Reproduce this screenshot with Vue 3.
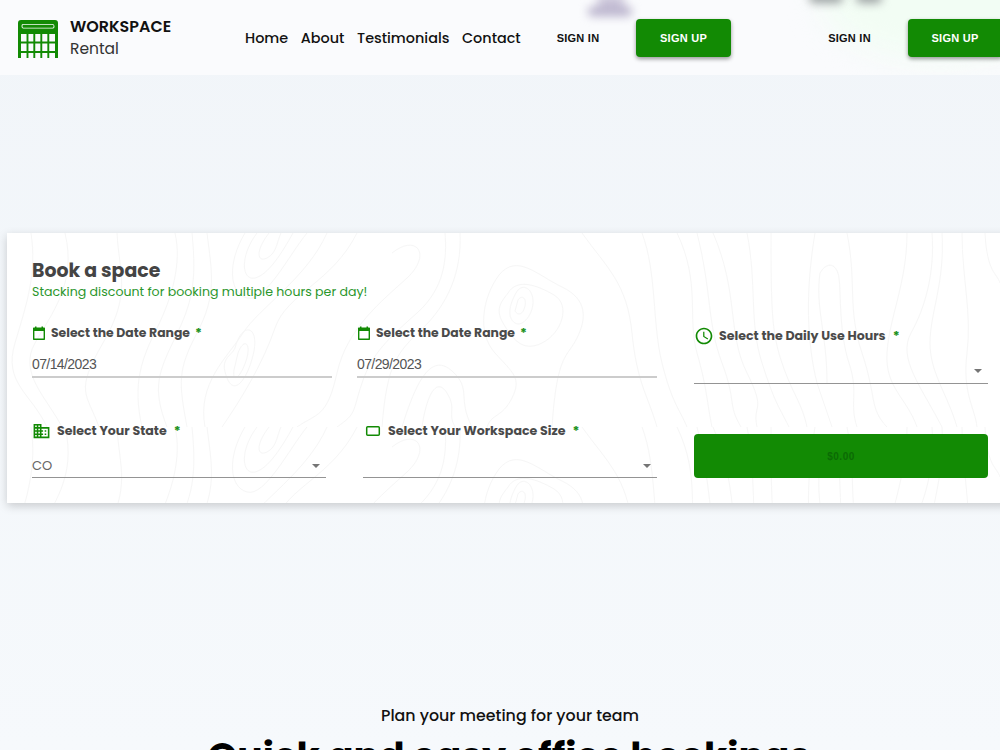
<template>
	<div class="page">
		<header class="top-bar">
			<span class="blur-shape violet"></span>
			<span class="blur-shape mint"></span>
			<span class="blur-shape dark"></span>
			<span class="blur-shape dark second"></span>

			<a class="brand">
				<svg class="logo" viewBox="0 0 40 39">
					<path fill-rule="evenodd" d="M3 0H37Q40 0 40 3V38H37V14H3V38H0V3Q0 0 3 0ZM5 4Q3.5 4 3.5 6T5 8.5H35Q36.500 8.500 36.500 6.500T35 4Z" fill="#128a04" />
					<rect x="4.500" y="4.700" width="31" height="3.100" rx="1" fill="#128a04" />
					<path d="M9.500 13V38M16.300 13V38M23.300 13V38M30.300 13V38M2 22.500H38M2 32H38" stroke="#128a04" stroke-width="1.900" />
				</svg>
				<div class="brand-text">
					<strong>WORKSPACE</strong>
					<span>Rental</span>
				</div>
			</a>

			<nav class="menu">
				<a v-for="item in menu" :key="item">{{ item }}</a>
			</nav>

			<div v-for="n in 2" :key="n" class="session">
				<button class="sign-in"><span>SIGN IN</span></button>
				<button class="sign-up"><span>SIGN UP</span></button>
			</div>
		</header>

		<section class="booking">
			<!-- topographic lines behind the form -->
			<svg class="contours" viewBox="0 0 993 270">
				<defs>
					<g id="contour-tile" fill="none" stroke="#f6f6f6" stroke-width="1">
						<path v-for="(line, i) in contours" :key="i" :d="line" />
					</g>
					<clipPath id="tile-clip"><rect width="993" height="194" /></clipPath>
				</defs>
				<g clip-path="url(#tile-clip)"><use href="#contour-tile" /></g>
				<g transform="translate(0 194)"><use href="#contour-tile" /></g>
			</svg>

			<div class="booking-body">
				<h2><span>Book a space</span></h2>
				<p class="discount"><span>Stacking discount for booking multiple hours per day!</span></p>

				<div class="fields">
					<div v-for="date in dates" :key="date" class="date-field">
						<label>
							<svg class="ico-calendar" viewBox="0 0 14 15">
								<path d="M1.700 2.200H12.300V13.200H1.700Z" fill="none" stroke="#128a04" stroke-width="1.400" stroke-linejoin="round" />
								<path d="M1 2H13V5H1ZM3 .5H4.500V3H3ZM9.500 .5H11V3H9.500Z" fill="#128a04" />
							</svg>
							<span class="txt">Select the Date Range</span><i>*</i>
						</label>
						<div class="date-value"><span>{{ date }}</span></div>
					</div>
					<div class="select-field hours">
						<label>
							<svg class="ico-clock" viewBox="0 0 24 24" fill="#128a04">
								<path d="M11.990 2C6.470 2 2 6.480 2 12s4.470 10 9.990 10C17.520 22 22 17.520 22 12S17.520 2 11.990 2zM12 20c-4.420 0-8-3.580-8-8s3.580-8 8-8 8 3.580 8 8-3.580 8-8 8zm.5-13H11v6l5.250 3.150.75-1.230-4.500-2.670z" />
							</svg>
							<span class="txt">Select the Daily Use Hours</span><i>*</i>
						</label>
						<div class="select-value"><span></span><b class="arrow"></b></div>
					</div>
				</div>

				<div class="fields second-row">
					<div class="select-field state">
						<label>
							<svg class="ico-state" viewBox="0 0 24 24" fill="#128a04">
								<path d="M12 7V3H2v18h20V7H12zM6 19H4v-2h2v2zm0-4H4v-2h2v2zm0-4H4V9h2v2zm0-4H4V5h2v2zm4 12H8v-2h2v2zm0-4H8v-2h2v2zm0-4H8V9h2v2zm0-4H8V5h2v2zm10 12h-8v-2h2v-2h-2v-2h2v-2h-2V9h8v10zm-2-8h-2v2h2v-2zm0 4h-2v2h2v-2z" />
							</svg>
							<span class="txt">Select Your State</span><i>*</i>
						</label>
						<div class="select-value"><span>CO</span><b class="arrow"></b></div>
					</div>
					<div class="select-field size">
						<label>
							<svg class="ico-size" viewBox="0 0 16 12">
								<rect x="1.700" y="1.700" width="12.600" height="8.600" rx="1" fill="none" stroke="#128a04" stroke-width="1.500" />
							</svg>
							<span class="txt">Select Your Workspace Size</span><i>*</i>
						</label>
						<div class="select-value"><span></span><b class="arrow"></b></div>
					</div>
					<button class="price" disabled>$0.00</button>
				</div>
			</div>
		</section>

		<section class="intro">
			<p><span>Plan your meeting for your team</span></p>
			<h1><span>Quick and easy office bookings</span></h1>
		</section>
	</div>
</template>

<script setup>
	import { ref } from 'vue';

	const menu = ref(['Home', 'About', 'Testimonials', 'Contact']);
	const dates = ref(['07/14/2023', '07/29/2023']);

	// curvas de nivel del fondo
	const contours = [
		'M24 0C30 40 20 70 8 110S24 160 40 194',
		'M58 0C70 50 45 80 28 110S40 165 55 194',
		'M110 0C112 40 125 60 96 110S80 160 92 194',
		'M168 0C175 30 165 65 150 95S125 150 135 194',
		'M185 0C190 50 185 70 168 105S145 155 160 194',
		'M200 0C205 40 210 62 190 100S172 150 180 194',
		'M238 0C220 30 222 60 240 65S282 22 300 0',
		'M250 0C232 24 235 48 248 45S275 20 286 0',
		'M262 0C248 18 250 30 260 25S270 8 274 0',
		'M320 0C300 45 252 75 236 100S190 150 198 194',
		'M350 0C325 50 280 60 268 95S235 165 215 194',
		'M385 20C410 0 425 22 400 45S340 95 330 140 310 180 290 194',
		'M438 0C440 25 438 55 410 80S365 120 355 150 350 180 330 194',
		'M453 0C455 40 440 72 415 96S380 130 375 194',
		'M228 115C235 88 252 93 247 118S228 165 220 145 224 124 228 115Z',
		'M231 120C237 104 245 110 239 128S225 150 227 137Z',
		'M492 42C510 20 530 42 555 54S580 85 570 105 550 120 545 194',
		'M492 42C475 65 470 100 488 120S515 145 505 165 485 180 480 194',
		'M501 60C510 45 530 52 547 62S555 100 535 110 505 105 496 90 496 67 501 60Z',
		'M509 60C514 50 525 54 526 67S516 95 508 90 502 72 509 60Z',
		'M511 67C514 62 520 64 518 73S511 83 508 78Z',
		'M395 194C410 145 425 120 445 138S450 165 465 194',
		'M415 194C420 160 430 144 440 160S440 180 448 194',
		'M575 0C600 35 620 50 625 100S640 160 650 194',
		'M635 0C650 40 645 90 655 130S672 175 680 194',
		'M670 0C694 50 680 85 690 120S700 170 705 194',
		'M690 0C705 60 700 90 715 130S720 170 734 194',
		'M706 0C732 60 720 100 740 140S745 170 750 194',
		'M740 0C750 50 742 90 755 130S770 170 782 194',
		'M764 0C764 80 765 100 775 130S795 170 800 194',
		'M808 0C798 60 800 110 810 150L825 194',
		'M813 40C820 28 830 30 832 45S832 100 842 130 842 170 850 194',
		'M813 40C808 75 820 100 820 150',
		'M840 0C850 50 840 75 855 120S862 175 880 194',
		'M900 0C900 50 882 85 880 120S900 165 910 194',
		'M925 0C928 40 918 75 904 100S915 155 935 194',
		'M935 0C938 50 923 80 923 110S940 160 950 194',
		'M955 0C955 45 965 80 960 120S968 175 970 194',
		'M978 0C980 40 990 40 993 50'
	];
</script>

<style>
	body{
		overflow: hidden;
	}
</style>

<style scoped>
	.page{
		width: 1000px;
		height: 750px;
		overflow: hidden;
		background: linear-gradient(#f1f5f9, #f6f9fc);
		font-family: Poppins, Inter, "Open Sans", sans-serif;
		color: #111;
	}
	.page *{
		box-sizing: border-box;
	}
	span, strong, .menu a{
		white-space: nowrap;
	}
	button{
		border: 0;
		padding: 0;
		border-radius: 4px;
		font-family: "Liberation Sans", Arial, sans-serif;
		font-weight: bold;
		font-size: 11px;
		letter-spacing: .25px;
	}

	.top-bar{
		position: relative;
		display: flex;
		align-items: center;
		height: 75px;
		overflow: hidden;
		background: #fafbfd;
	}
	/* page art seen through the bar */
	.blur-shape{
		position: absolute;
		left: 588px;
		top: 7px;
		width: 44px;
		height: 9px;
		border-radius: 5px;
		filter: blur(5px);
		background: #b4adc8;
	}
	.violet::before{
		content: "";
		position: absolute;
		left: 10px;
		top: -12px;
		width: 26px;
		height: 14px;
		background: #c9c3d8;
	}
	.mint{
		left: 820px;
		top: -70px;
		width: 240px;
		height: 130px;
		border-radius: 50%;
		background: #f2fdf4;
		filter: blur(15px);
	}
	.dark{
		left: 809px;
		top: -8px;
		width: 34px;
		height: 11px;
		background: #999fa0;
		filter: blur(5px);
	}
	.dark.second{
		left: 856px;
		width: 26px;
	}
	.brand{
		position: relative;
		display: flex;
		flex: none;
		width: 245px;
		padding: 2px 0 0 18px;
	}
	.logo{
		width: 40px;
		height: 39px;
		margin-top: 3px;
	}
	.brand-text{
		display: flex;
		flex-direction: column;
		margin-left: 12px;
		font-size: 15.500px;
		line-height: 22px;
	}
	.brand-text strong{
		margin-top: -1px;
		font-size: 15.950px;
		font-weight: 600;
	}
	.brand-text span{
		color: #333;
	}
	.menu{
		position: relative;
		display: flex;
		flex: none;
		gap: 12.600px;
		width: 290px;
		padding-top: 1px;
		font-size: 14.400px;
		font-weight: 500;
	}
	.session{
		position: relative;
		display: flex;
		flex: none;
		align-items: center;
		width: 271.500px;
		padding-left: 8px;
	}
	.sign-in{
		width: 70px;
		height: 36px;
		background: transparent;
		color: #111;
	}
	.sign-up{
		width: 95px;
		height: 38px;
		margin-left: 23px;
		background: #128a04;
		color: #fff;
		box-shadow: 0 2px 4px rgba(0,0,0,.4);
	}

	.booking{
		position: relative;
		width: 1010px;
		height: 270px;
		margin: 158px 0 0 7px;
		background: #fff;
		box-shadow: 0 3px 9px rgba(0,0,0,.18);
	}
	.contours{
		position: absolute;
		left: 0;
		top: 0;
		width: 993px;
		height: 270px;
	}
	.booking-body{
		position: relative;
		padding: 26px 0 0 25px;
	}
	h2{
		margin: 0;
		font-size: 18.900px;
		font-weight: 700;
		line-height: 24px;
		color: #444;
	}
	.discount{
		margin: 0;
		font-size: 12.580px;
		line-height: 18px;
		color: #2b962c;
	}
	.fields{
		display: flex;
		height: 100px;
		padding-top: 22px;
	}
	.date-field{
		width: 300px;
		margin-right: 25px;
	}
	label{
		display: flex;
		align-items: center;
		height: 20px;
		font-size: 12.400px;
		font-weight: 700;
		color: #4a4a4a;
	}
	label i{
		margin: 0 0 0 5px;
		font-size: 13px;
		font-style: normal;
		font-weight: 700;
		color: #189018;
	}
	.ico-calendar{
		width: 14px;
		height: 15px;
		margin-right: 5px;
	}
	.date-value{
		height: 35px;
		padding-top: 11px;
		border-bottom: 2px solid #ccc;
		font: 14px/20px "Liberation Sans", Arial, sans-serif;
		letter-spacing: -.6px;
		color: #555;
	}
	.select-field{
		width: 294px;
	}
	.select-field label{
		font-size: 12.600px;
	}
	.hours{
		margin-left: 12px;
		padding-top: 3px;
	}
	.select-value{
		display: flex;
		align-items: center;
		justify-content: space-between;
		height: 37px;
		padding: 13px 6px 0 0;
		border-bottom: 1px solid #949494;
		font-size: 13px;
		color: #666;
	}
	.hours .select-value{
		height: 38px;
	}
	.arrow{
		border: 4px solid transparent;
		border-top-color: #757575;
		border-bottom: 0;
	}
	.ico-clock{
		width: 20px;
		height: 20px;
		margin-right: 5px;
	}
	.ico-state{
		width: 19px;
		height: 20px;
		margin-right: 6px;
	}
	.ico-size{
		width: 16px;
		height: 12px;
		margin: 0 7px 0 2px;
	}
	.size{
		margin-left: 37px;
	}
	.select-field label i{
		margin-left: 7px;
	}
	.second-row{
		padding-top: 20px;
	}
	.price{
		width: 294px;
		height: 44px;
		margin: 13px 0 0 37px;
		background: #128a04;
		color: #0b6b04;
		font-size: 10px;
		letter-spacing: .5px;
	}

	.intro{
		padding-top: 201px;
		text-align: center;
	}
	.intro p{
		margin: 0 0 0 20px;
		font-size: 15.850px;
		font-weight: 500;
		line-height: 24px;
	}
	.intro h1{
		margin: -2px 0 0 18px;
		font-size: 37.700px;
		font-weight: 700;
		line-height: 60px;
		color: #000;
	}
</style>
